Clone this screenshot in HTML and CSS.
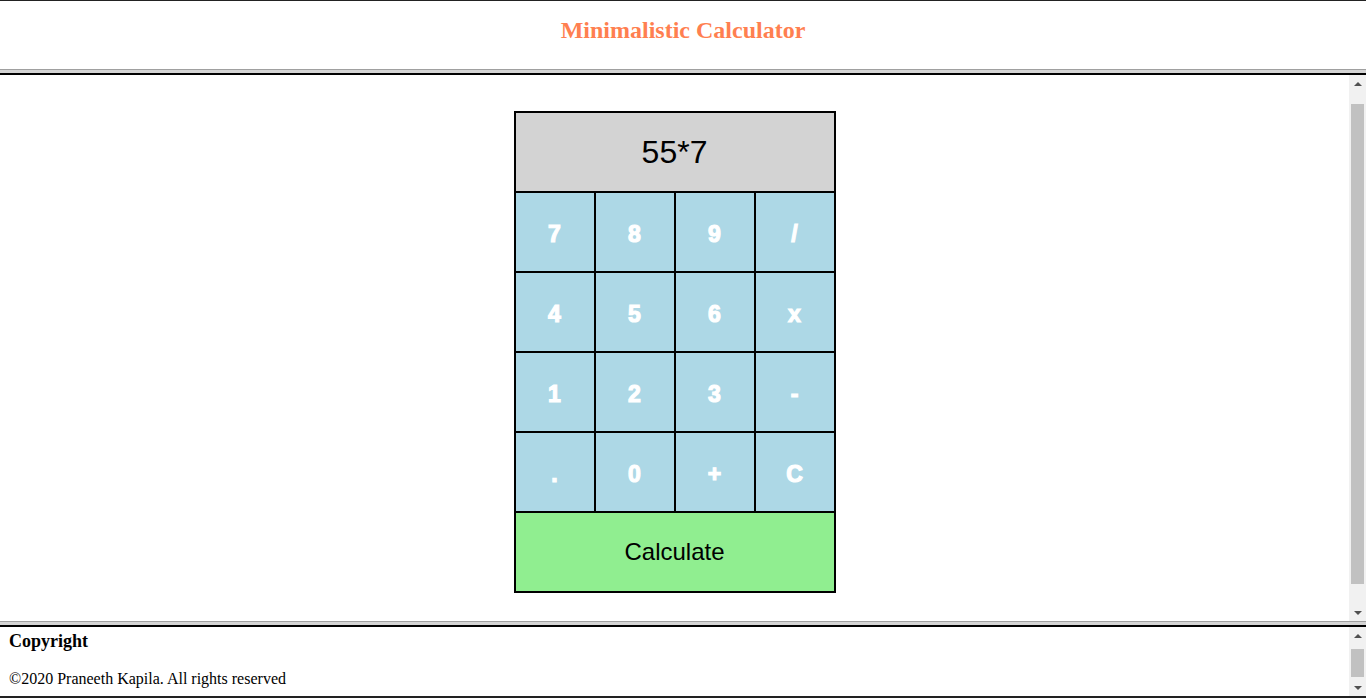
FILE: index.html
```html
<!DOCTYPE html>
<html>
<head>
<meta charset="utf-8">
<title>Minimalistic Calculator</title>
<link rel="stylesheet" href="styles.css">
</head>
<body>
<div class="page">
  <header class="top-frame">
    <h2 class="title">Minimalistic Calculator</h2>
  </header>
  <div class="divider"></div>
  <div class="frame middle-frame">
    <main class="frame-body calc-area">
      <table class="calc">
        <tr><td colspan="4" class="display">55*7</td></tr>
        <tr><td class="key">7</td><td class="key">8</td><td class="key">9</td><td class="key">/</td></tr>
        <tr><td class="key">4</td><td class="key">5</td><td class="key">6</td><td class="key">x</td></tr>
        <tr><td class="key">1</td><td class="key">2</td><td class="key">3</td><td class="key">-</td></tr>
        <tr><td class="key">.</td><td class="key">0</td><td class="key">+</td><td class="key">C</td></tr>
        <tr><td colspan="4" class="calculate">Calculate</td></tr>
      </table>
    </main>
    <div class="scrollbar">
      <div class="arrow up"></div>
      <div class="track"><div class="thumb thumb-mid"></div></div>
      <div class="arrow down"></div>
    </div>
  </div>
  <div class="divider"></div>
  <div class="frame bottom-frame">
    <footer class="frame-body foot">
      <div class="foot-title">Copyright</div>
      <div class="foot-text">©2020 Praneeth Kapila. All rights reserved</div>
    </footer>
    <div class="scrollbar">
      <div class="arrow up"></div>
      <div class="track track-bottom"><div class="thumb thumb-bottom"></div></div>
      <div class="arrow down"></div>
    </div>
  </div>
</div>
</body>
</html>
```
FILE: styles.css
```css
html, body {
  margin: 0;
  padding: 0;
  background: #fff;
  overflow: hidden;
}
body {
  font-family: "Liberation Serif", "Times New Roman", serif;
  color: #000;
}
.page {
  height: 698px;
  display: flex;
  flex-direction: column;
  border-bottom: 2px solid #222;
  box-sizing: border-box;
}
.top-frame {
  height: 68px;
  border-top: 1px solid #222;
  display: flex;
  align-items: center;
  justify-content: center;
  flex: none;
}
.title {
  margin: 0;
  font-size: 24px;
  font-weight: bold;
  color: #ff7f50;
  position: relative;
  top: -5px;
}
.divider {
  flex: none;
  height: 3px;
  border-top: 1px solid #a0a0a0;
  background: #d4d4d4;
  border-bottom: 2px solid #000;
}
.frame {
  display: flex;
  flex: none;
}
.middle-frame { height: 546px; }
.bottom-frame { flex: 1; }
.frame-body {
  flex: 1;
  min-width: 0;
}
.calc-area {
  display: flex;
  justify-content: center;
  align-items: flex-start;
  padding-top: 36px;
}
.calc {
  border-collapse: collapse;
  border: 2px solid #000;
  font-family: "Liberation Sans", Arial, sans-serif;
}
.calc td {
  border: 2px solid #000;
  width: 78px;
  height: 78px;
  padding: 0;
  text-align: center;
  vertical-align: middle;
}
.display {
  background: #d3d3d3;
  font-size: 32px;
}
.calc td.key {
  background: #add8e6;
  color: #fff;
  font-weight: bold;
  font-size: 23px;
  height: 74px;
  padding-top: 4px;
  -webkit-text-stroke: 1.2px #fff;
}
.calculate {
  background: #90ee90;
  font-size: 24px;
}
.foot {
  padding: 4px 9px 0;
}
.foot-title {
  font-weight: bold;
  font-size: 18px;
  line-height: 21px;
}
.foot-text {
  font-size: 16px;
  margin-top: 18px;
  line-height: 18px;
}
.scrollbar {
  width: 17px;
  flex: none;
  background: #f1f1f1;
  display: flex;
  flex-direction: column;
}
.arrow {
  height: 17px;
  flex: none;
  display: flex;
  align-items: center;
  justify-content: center;
}
.arrow.up::before {
  content: "";
  border-left: 4px solid transparent;
  border-right: 4px solid transparent;
  border-bottom: 4px solid #505050;
}
.arrow.down::before {
  content: "";
  border-left: 4px solid transparent;
  border-right: 4px solid transparent;
  border-top: 4px solid #505050;
}
.track {
  flex: 1;
  display: flex;
  flex-direction: column;
  padding: 0 2px;
}
.thumb {
  background: #c1c1c1;
}
.thumb-mid {
  margin-top: 12px;
  height: 480px;
}
.thumb-bottom {
  margin-top: 5px;
  height: 28px;
}
```
